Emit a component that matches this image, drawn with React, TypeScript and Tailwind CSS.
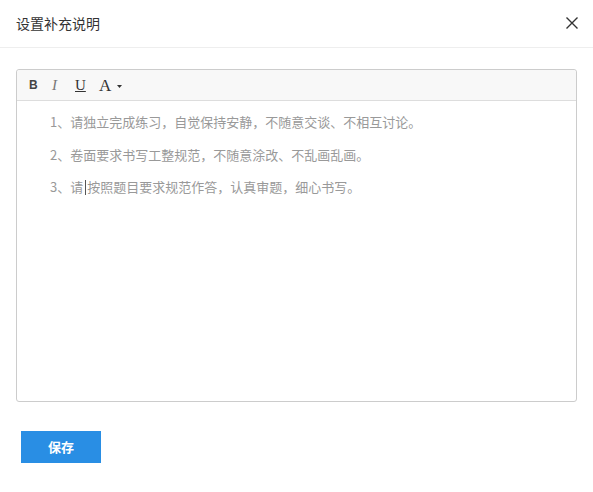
import React from "react";

export default function App() {
  const sans = { fontFamily: '"Microsoft YaHei", "Noto Sans CJK SC", sans-serif' };
  return (
    <div className="w-[593px] h-[492px] bg-white overflow-hidden" style={sans}>
      <div className="h-[48px] border-b border-[#eeeeee] flex items-center justify-between pl-[16px] pr-[14px]">
        <span className="text-[14px] text-[#333333]">设置补充说明</span>
        <svg width="14" height="14" viewBox="0 0 14 14" className="-mt-[1px]">
          <path d="M1.5 1.5 L12.5 12.5 M12.5 1.5 L1.5 12.5" stroke="#333" strokeWidth="1.4" fill="none" />
        </svg>
      </div>
      <div className="mt-[21px] mx-[16px] h-[333px] border border-[#cccccc] rounded-[3px] flex flex-col">
        <div className="h-[31px] bg-[#f8f8f8] border-b border-[#dddddd] flex items-center rounded-t-[3px]">
          <span className="ml-[12px] w-[10px] text-[12px] font-bold text-[#444] leading-none" style={{ fontFamily: '"Liberation Sans", Arial, sans-serif' }}>B</span>
          <span className="ml-[13px] w-[10px] text-[15px] italic text-[#777] leading-none" style={{ fontFamily: '"Liberation Serif", serif' }}>I</span>
          <span className="ml-[13px] w-[12px] text-[15px] underline text-[#333] leading-none" style={{ fontFamily: '"Liberation Serif", serif' }}>U</span>
          <span className="ml-[12px] text-[17px] text-[#333] leading-none" style={{ fontFamily: '"Liberation Serif", serif' }}>A</span>
          <svg width="5" height="3" viewBox="0 0 5 3" className="ml-[6px] mt-[2px]">
            <path d="M0 0 L5 0 L2.5 3 Z" fill="#333" />
          </svg>
        </div>
        <div className="pt-[11px] pl-[33px] flex flex-col gap-[12.5px] text-[13px] leading-[20px] text-[#999999]">
          <p>1、请独立完成练习，自觉保持安静，不随意交谈、不相互讨论。</p>
          <p>2、卷面要求书写工整规范，不随意涂改、不乱画乱画。</p>
          <p className="flex">
            <span>3、请</span>
            <span className="w-[1px] h-[15px] bg-[#555] mt-[3px] ml-[2px] mr-[1px]"></span>
            <span>按照题目要求规范作答，认真审题，细心书写。</span>
          </p>
        </div>
      </div>
      <div className="mt-[29px] ml-[21px]">
        <button className="w-[80px] h-[32px] bg-[#298ee4] text-white text-[13px] font-bold">保存</button>
      </div>
    </div>
  );
}
